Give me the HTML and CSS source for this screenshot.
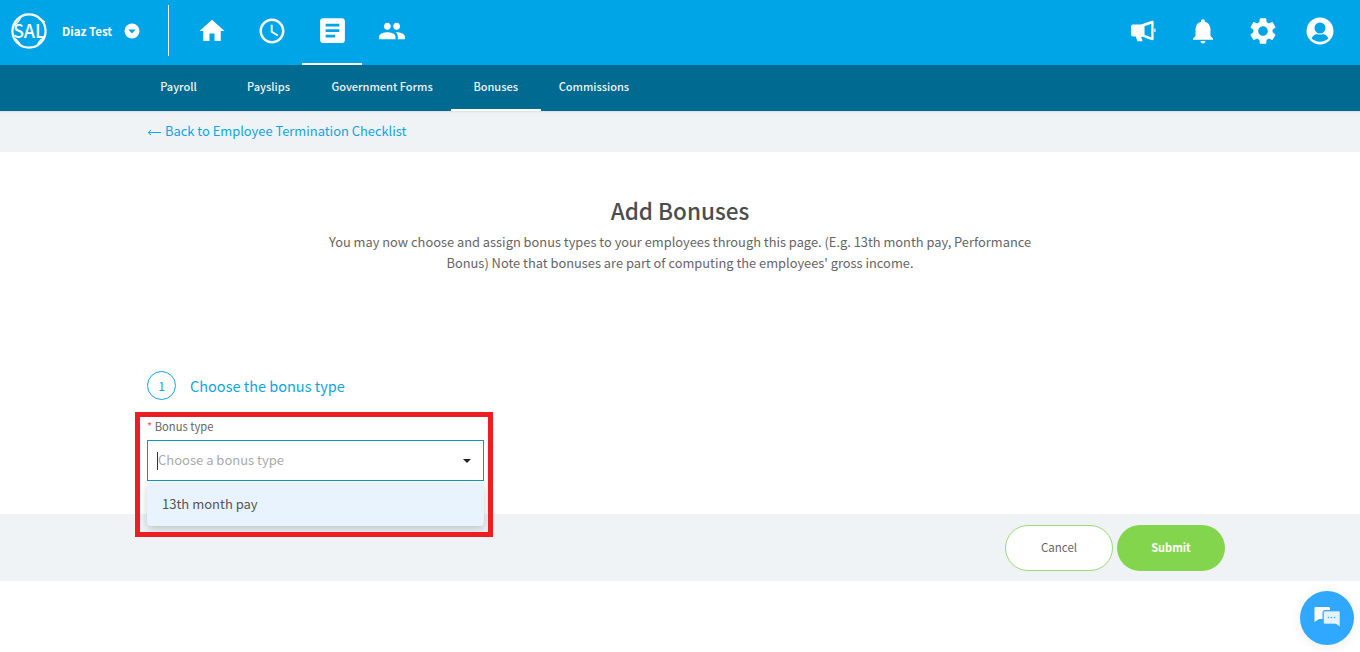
FILE: index.html
```html
<!DOCTYPE html>
<html lang="en">
<head>
  <meta charset="UTF-8">
  <meta name="viewport" content="width=device-width, initial-scale=1.0">
  <title>Add Bonuses</title>
  <link rel="stylesheet" href="styles.css">
</head>
<body>
  <header class="topbar">
    <div class="account">
      <svg class="logo" viewBox="0 0 36 36">
        <circle cx="18" cy="18" r="16.6" fill="none" stroke="#fff" stroke-width="2.2"/>
        <path d="M3 12c3-1 5-4 7-8M26 3c2 3 5 5 8 6M2 25c3 0 5 3 8 8M34 25c-3 0-6 3-8 8" fill="none" stroke="#fff" stroke-width="1.6"/>
        <text x="18" y="24.500" text-anchor="middle" class="logo-text">SAL</text>
      </svg>
      <span class="account-name">Diaz Test</span>
      <svg class="account-caret" viewBox="0 0 16 16">
        <circle cx="8" cy="8" r="7.5" fill="#fff"/>
        <path d="M4.4 6.4h7.2L8 10.6z" fill="#00a5e7"/>
      </svg>
    </div>
    <nav class="main-nav">
      <a class="main-nav-item">
        <svg viewBox="0 0 24 24" class="icon-home"><path d="M10 20v-6h4v6h5v-8h3L12 3 2 12h3v8z"/></svg>
      </a>
      <a class="main-nav-item">
        <svg viewBox="0 0 24 24" class="icon-clock"><path d="M11.99 2C6.47 2 2 6.48 2 12s4.47 10 9.99 10C17.52 22 22 17.52 22 12S17.52 2 11.99 2zM12 20c-4.42 0-8-3.58-8-8s3.58-8 8-8 8 3.58 8 8-3.58 8-8 8zM12.5 7H11v6l5.25 3.15.75-1.23-4.5-2.67z"/></svg>
      </a>
      <a class="main-nav-item active">
        <svg viewBox="0 0 24 24" class="icon-doc"><path d="M19 3H5c-1.1 0-2 .9-2 2v14c0 1.1.9 2 2 2h14c1.1 0 2-.9 2-2V5c0-1.1-.9-2-2-2zm-5 14H7v-2h7v2zm3-4H7v-2h10v2zm0-4H7V7h10v2z"/></svg>
      </a>
      <a class="main-nav-item">
        <svg viewBox="0 0 24 24" class="icon-people"><path d="M16 11c1.66 0 2.99-1.34 2.99-3S17.66 5 16 5c-1.66 0-3 1.34-3 3s1.34 3 3 3zm-8 0c1.66 0 2.99-1.34 2.99-3S9.66 5 8 5C6.34 5 5 6.34 5 8s1.34 3 3 3zm0 2c-2.33 0-7 1.17-7 3.5V19h14v-2.5c0-2.33-4.67-3.5-7-3.5zm8 0c-.29 0-.62.02-.97.05 1.16.84 1.97 1.97 1.97 3.45V19h6v-2.5c0-2.33-4.67-3.5-7-3.5z"/></svg>
      </a>
    </nav>
    <div class="tools">
      <a class="tool">
        <svg viewBox="0 0 26 22" class="icon-horn"><path d="M1 6.5C1 5.4 1.9 4.5 3 4.5h8L22 .8c.9-.3 1.600.2 1.600 1.100v17.200c0 .9-.7 1.400-1.600 1.100l-10-3.600v.4h-.8l1.400 4.200H7.400L5.800 16.500H3c-1.100 0-2-.9-2-2zM14.500 6.300v8.500l6.800 2.700V3.700z" fill-rule="evenodd"/><path d="M24.300 8.500h1.200v3.500h-1.200z"/></svg>
      </a>
      <a class="tool">
        <svg viewBox="0 0 24 24" class="icon-bell"><path d="M12 22c1.100 0 2-.9 2-2h-4c0 1.100.9 2 2 2zm6-6v-5c0-3.070-1.630-5.640-4.500-6.320V4c0-.83-.67-1.500-1.500-1.500s-1.500.67-1.500 1.500v.68C7.640 5.360 6 7.920 6 11v5l-2 2v1h16v-1l-2-2z"/></svg>
      </a>
      <a class="tool">
        <svg viewBox="0 0 24 24" class="icon-gear"><path d="M19.140 12.940c.04-.3.06-.61.06-.94 0-.32-.02-.64-.07-.94l2.030-1.580c.18-.14.23-.41.12-.61l-1.920-3.320c-.12-.22-.37-.29-.59-.22l-2.390.96c-.5-.38-1.030-.7-1.620-.94l-.36-2.540c-.04-.24-.24-.41-.48-.41h-3.840c-.24 0-.43.17-.47.41l-.36 2.540c-.59.24-1.130.57-1.620.94l-2.390-.96c-.22-.08-.47 0-.59.22L2.740 8.870c-.12.21-.08.47.12.61l2.030 1.580c-.05.3-.09.63-.09.94s.02.64.07.94l-2.030 1.580c-.18.14-.23.41-.12.61l1.920 3.320c.12.22.37.29.59.22l2.390-.96c.5.38 1.030.7 1.620.94l.36 2.540c.05.24.24.41.48.41h3.840c.24 0 .44-.17.47-.41l.36-2.540c.59-.24 1.130-.56 1.620-.94l2.390.96c.22.08.47 0 .59-.22l1.920-3.320c.12-.22.07-.47-.12-.61l-2.010-1.580zM12 15.600c-1.980 0-3.600-1.620-3.600-3.600s1.620-3.600 3.600-3.600 3.600 1.620 3.600 3.600-1.620 3.600-3.600 3.600z"/></svg>
      </a>
      <a class="tool">
        <svg viewBox="0 0 28 28" class="icon-user">
          <circle cx="14" cy="14" r="13.500" fill="#fff"/>
          <circle cx="14" cy="11" r="5.500" fill="#00a5e7"/>
          <path d="M5.500 21.500c1.200-3 3.500-4.300 5.500-4.600 1.900.9 4.100.9 6 0 2 .3 4.300 1.600 5.500 4.600-2.100 2-5 3.200-8.500 3.200s-6.400-1.200-8.500-3.200z" fill="#00a5e7"/>
        </svg>
      </a>
    </div>
  </header>

  <nav class="sub-nav">
    <a class="sub-nav-item">Payroll</a>
    <a class="sub-nav-item">Payslips</a>
    <a class="sub-nav-item">Government Forms</a>
    <a class="sub-nav-item active">Bonuses</a>
    <a class="sub-nav-item">Commissions</a>
  </nav>

  <div class="back-bar">
    <a class="back-link"><svg class="back-arrow" viewBox="0 0 14 7"><path d="M14 3.500H1.500M4 1L1.200 3.500 4 6" fill="none" stroke="#0fa5e3"/></svg>Back to Employee Termination Checklist</a>
  </div>

  <main class="content">
    <div class="intro">
      <h1>Add Bonuses</h1>
      <p>You may now choose and assign bonus types to your employees through this page. (E.g. 13th month pay, Performance Bonus) Note that bonuses are part of computing the employees' gross income.</p>
    </div>

    <div class="step">
      <span class="step-num">1</span>
      <span class="step-title">Choose the bonus type</span>
    </div>

    <div class="field">
      <label class="field-label"><span class="req">*</span> Bonus type</label>
      <div class="select">
        <span class="cursor"></span>
        <span class="placeholder">Choose a bonus type</span>
        <span class="select-caret"></span>
        <div class="dropdown">13th month pay</div>
      </div>
    </div>
  </main>

  <footer class="actions">
    <button class="btn btn-cancel">Cancel</button>
    <button class="btn btn-submit">Submit</button>
  </footer>

  <div class="highlight"></div>

  <button class="chat">
    <svg viewBox="0 0 28 24">
      <path d="M2.500 1h13c.8 0 1.500.7 1.500 1.500V4h-5c-1.500 0-2.500 1-2.500 2.500V13H6l-4.500 3V2.500C1.500 1.700 1.700 1 2.500 1z" fill="#fff"/>
      <path d="M12 5h13.500c.8 0 1.500.7 1.500 1.500V21l-4-3H12c-.8 0-1.500-.7-1.500-1.500v-10C10.500 5.700 11.200 5 12 5z" fill="#e4f3ff" stroke="#30a8ff" stroke-width=".6"/>
      <circle cx="15.500" cy="11.500" r=".8" fill="#30a8ff"/>
      <circle cx="18.500" cy="11.500" r=".8" fill="#30a8ff"/>
      <circle cx="21.500" cy="11.500" r=".8" fill="#30a8ff"/>
    </svg>
  </button>
</body>
</html>
```

FILE: styles.css
```css
* {
  box-sizing: border-box;
}

body {
  margin: 0;
  height: 652px;
  overflow: hidden;
  position: relative;
  background: #fff;
  font-family: "Noto Sans CJK JP", "Open Sans", sans-serif;
  color: #555;
}

/* top bar */
.topbar {
  height: 65px;
  background: #00a5e7;
  display: flex;
  align-items: center;
  color: #fff;
}

.account {
  width: 169px;
  height: 51px;
  margin-top: -4px;
  padding-left: 11px;
  display: flex;
  align-items: center;
  border-right: 1px solid #fff;
}

.logo {
  width: 36px;
  height: 36px;
  overflow: visible;
}

.logo-text {
  font-family: "Noto Sans CJK JP", sans-serif;
  font-size: 18px;
  font-weight: 500;
  fill: #fff;
}

.account-name {
  margin-left: 15px;
  font-size: 11.5px;
  font-weight: 700;
  line-height: 16px;
}

.account-caret {
  width: 16px;
  height: 16px;
  margin-left: 12px;
}

.main-nav {
  display: flex;
  margin-left: 13px;
  height: 65px;
}

.main-nav-item {
  width: 60px;
  height: 65px;
  display: flex;
  align-items: center;
  justify-content: center;
  padding-bottom: 2px;
  border-bottom: 2px solid transparent;
}

.main-nav-item.active {
  border-bottom-color: #fff;
}

.main-nav-item svg,
.tool svg {
  fill: #fff;
  display: block;
}

.icon-home { width: 30px; height: 30px; }
.icon-clock { width: 30px; height: 30px; }
.icon-doc { width: 33px; height: 33px; }
.icon-people { width: 28px; height: 28px; }

.tools {
  margin-left: auto;
  margin-right: 13px;
  display: flex;
  height: 65px;
}

.tool {
  width: 60px;
  display: flex;
  align-items: center;
  justify-content: center;
  padding-bottom: 4px;
}

.tool:last-child {
  width: 54px;
}

.icon-horn { width: 26px; height: 22px; }
.icon-bell { width: 30px; height: 30px; }
.icon-gear { width: 32px; height: 32px; }
.icon-user { width: 28px; height: 28px; }

/* second row */
.sub-nav {
  height: 46px;
  background: #006a90;
  padding-left: 133.5px;
  display: flex;
}

.sub-nav-item {
  min-width: 90px;
  padding: 0 18px 2px;
  display: flex;
  align-items: center;
  justify-content: center;
  color: #f0f5f8;
  font-size: 11px;
  font-weight: 500;
  border-bottom: 2px solid transparent;
}

.sub-nav-item.active {
  border-bottom-color: #fff;
}

.back-bar {
  height: 41px;
  background: #eff3f6;
  padding: 0 0 2px 147px;
  display: flex;
  align-items: center;
  box-shadow: inset 0 2px 2px -1px rgba(0, 0, 0, 0.08);
}

.back-link {
  display: flex;
  align-items: center;
  color: #0fa5e3;
  font-size: 12.9px;
  line-height: 20px;
}

.back-arrow {
  width: 14px;
  height: 7px;
  margin: 3px 4px 0 0;
}

/* form */
.content {
  height: 362px;
  padding: 41px 147px 0;
}

.intro {
  width: 720px;
  margin: 0 auto;
  text-align: center;
}

.intro h1 {
  margin: 0;
  font-size: 22.5px;
  font-weight: 500;
  line-height: 34px;
  color: #4d4d4d;
}

.intro p {
  margin: 4px 0 0;
  font-size: 12.85px;
  line-height: 21px;
  color: #666;
}

.step {
  display: flex;
  align-items: center;
  margin-top: 98px;
}

.step-num {
  width: 29px;
  height: 29px;
  border: 1px solid #0fa5e3;
  border-radius: 50%;
  display: flex;
  align-items: center;
  justify-content: center;
  color: #0fa5e3;
  font-size: 12px;
}

.step-title {
  margin-left: 14px;
  color: #0fa5e3;
  font-size: 14.5px;
  line-height: 24px;
}

.field {
  width: 337px;
  margin-top: 17px;
}

.field-label {
  display: block;
  font-size: 11.2px;
  line-height: 18px;
  color: #666;
}

.req {
  color: #f5606a;
}

.select {
  position: relative;
  height: 41px;
  margin-top: 5px;
  border: 1px solid #0f96bd;
  display: flex;
  align-items: center;
  padding-left: 9px;
}

.cursor {
  width: 1px;
  height: 18px;
  background: #333;
}

.placeholder {
  font-size: 13px;
  line-height: 18px;
  margin-top: -2px;
  color: #aaa;
}

.select-caret {
  margin-left: auto;
  margin-right: 12px;
  border-left: 4px solid transparent;
  border-right: 4px solid transparent;
  border-top: 4px solid #222;
}

.dropdown {
  position: absolute;
  left: -1px;
  right: -1px;
  top: 42px;
  height: 43px;
  padding: 0 0 2px 15px;
  display: flex;
  align-items: center;
  background: #e8f3fd;
  border-radius: 4px;
  box-shadow: 0 3px 8px rgba(0, 0, 0, 0.2);
  font-size: 13px;
  color: #555;
  z-index: 2;
}

.actions {
  height: 67px;
  background: #eff3f6;
  padding: 11px 135px 0 0;
  display: flex;
  justify-content: flex-end;
  align-items: flex-start;
  gap: 4px;
}

.btn {
  width: 108px;
  height: 46px;
  border-radius: 23px;
  font-family: inherit;
  font-size: 11.5px;
  line-height: 16px;
  padding-bottom: 4px;
}

.btn-cancel {
  background: #fff;
  border: 1px solid #9bdb72;
  color: #666;
}

.btn-submit {
  background: #84d54e;
  border: none;
  color: #fff;
  font-size: 11px;
  font-weight: 700;
}

/* annotation over the page */
.highlight {
  position: absolute;
  left: 135px;
  top: 412px;
  width: 358px;
  height: 125px;
  border: 5px solid #ee1c25;
  z-index: 3;
}

.chat {
  position: absolute;
  left: 1300px;
  top: 591px;
  width: 54px;
  height: 54px;
  padding: 0;
  border: none;
  border-radius: 50%;
  background: #30a8ff;
  box-shadow: 0 2px 12px rgba(0, 0, 0, 0.08);
  display: flex;
  align-items: center;
  justify-content: center;
}

.chat svg {
  width: 28px;
  height: 24px;
}
```
